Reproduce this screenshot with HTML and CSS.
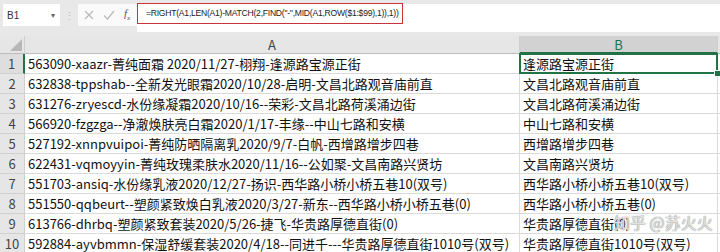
FILE: index.html
```html
<!DOCTYPE html>
<html lang="zh-CN">
<head>
    <meta charset="UTF-8">
    <title>Sheet1</title>
    <link rel="stylesheet" href="styles.css">
</head>
<body>
<div class="toolbar">
    <div class="namebox"><span>B1</span><span class="caret">&#9662;</span></div>
    <div class="grip">&#8942;</div>
    <div class="fnbtns">
        <svg width="10" height="10" viewBox="0 0 10 10"><path d="M1 1L9 9M9 1L1 9" stroke="#b9b9b9" stroke-width="1.2" fill="none"/></svg>
        <svg width="12" height="10" viewBox="0 0 12 10"><path d="M1 5.5L4.5 9L11 1" stroke="#b9b9b9" stroke-width="1.2" fill="none"/></svg>
        <span class="fx">f<sub>x</sub></span>
    </div>
    <div class="formula">
        <span class="formula-text">=RIGHT(A1,LEN(A1)-MATCH(2,FIND("-",MID(A1,ROW($1:$99),1)),1))</span>
        <div class="mark"></div>
    </div>
</div>

<div class="sheet">
    <div class="corner"><div class="tri"></div></div>
    <div class="colhead">A</div>
    <div class="colhead active">B</div>
    <div class="colhead"></div>

    <div class="rowhead active">1</div>
    <div class="cell">563090-xaazr-菁纯面霜 2020/11/27-栩翔-逢源路宝源正街</div>
    <div class="cell selected">逢源路宝源正街<i class="handle"></i></div>
    <div class="cell"></div>

    <div class="rowhead">2</div>
    <div class="cell">632838-tppshab--全新发光眼霜2020/10/28-启明-文昌北路观音庙前直</div>
    <div class="cell">文昌北路观音庙前直</div>
    <div class="cell"></div>

    <div class="rowhead">3</div>
    <div class="cell">631276-zryescd-水份缘凝霜2020/10/16--荣彩-文昌北路荷溪涌边街</div>
    <div class="cell">文昌北路荷溪涌边街</div>
    <div class="cell"></div>

    <div class="rowhead">4</div>
    <div class="cell">566920-fzgzga--净澈焕肤亮白霜2020/1/17-丰缘--中山七路和安横</div>
    <div class="cell">中山七路和安横</div>
    <div class="cell"></div>

    <div class="rowhead">5</div>
    <div class="cell">527192-xnnpvuipoi-菁纯防晒隔离乳2020/9/7-白帆-西增路增步四巷</div>
    <div class="cell">西增路增步四巷</div>
    <div class="cell"></div>

    <div class="rowhead">6</div>
    <div class="cell">622431-vqmoyyin-菁纯玫瑰柔肤水2020/11/16--公如聚-文昌南路兴贤坊</div>
    <div class="cell">文昌南路兴贤坊</div>
    <div class="cell"></div>

    <div class="rowhead">7</div>
    <div class="cell">551703-ansiq-水份缘乳液2020/12/27-扬识-西华路小桥小桥五巷10(双号)</div>
    <div class="cell">西华路小桥小桥五巷10(双号)</div>
    <div class="cell"></div>

    <div class="rowhead">8</div>
    <div class="cell">551550-qqbeurt--塑颜紧致焕白乳液2020/3/27-新东--西华路小桥小桥五巷(0)</div>
    <div class="cell">西华路小桥小桥五巷(0)</div>
    <div class="cell"></div>

    <div class="rowhead">9</div>
    <div class="cell">613766-dhrbq-塑颜紧致套装2020/5/26-捷飞-华贵路厚德直街(0)</div>
    <div class="cell">华贵路厚德直街(0)</div>
    <div class="cell"></div>

    <div class="rowhead">10</div>
    <div class="cell">592884-ayvbmmn-保湿舒缓套装2020/4/18--同进千---华贵路厚德直街1010号(双号)</div>
    <div class="cell">华贵路厚德直街1010号(双号)</div>
    <div class="cell"></div>
</div>

<div class="watermark">知乎 @苏火火</div>
</body>
</html>
```

FILE: styles.css
```css
body {
    margin: 0;
    width: 720px;
    height: 252px;
    overflow: hidden;
    background: #e8e8e8;
    font-family: "Noto Sans CJK SC", "Noto Sans", sans-serif;
    position: relative;
}
.toolbar {
    display: flex;
    align-items: flex-start;
    height: 32px;
    padding-top: 4px;
    padding-left: 3px;
    box-sizing: border-box;
    margin-bottom: 4px;
}
.namebox {
    width: 57px;
    height: 22px;
    background: #fff;
    display: flex;
    align-items: center;
    justify-content: space-between;
    padding: 0 5px 0 4px;
    box-sizing: border-box;
    font-family: "Liberation Sans", sans-serif;
    font-size: 10px;
    color: #333;
}
.caret {
    font-size: 8px;
    color: #666;
}
.grip {
    width: 18px;
    text-align: center;
    color: #b8b8b8;
    font-size: 11px;
    line-height: 22px;
}
.fnbtns {
    width: 59px;
    height: 22px;
    background: #fafafa;
    display: flex;
    align-items: center;
    gap: 9px;
    padding-left: 6px;
    box-sizing: border-box;
}
.fx {
    font-family: "Liberation Serif", serif;
    font-style: italic;
    font-size: 11px;
    color: #555;
}
.fx sub {
    font-size: 7px;
}
.formula {
    flex: 1;
    height: 28px;
    background: #fff;
    position: relative;
    padding-left: 9px;
    box-sizing: border-box;
    font-family: "Liberation Sans", sans-serif;
    font-size: 8.6px;
    letter-spacing: -0.25px;
    line-height: 18px;
    color: #222;
}
.mark {
    position: absolute;
    left: 0;
    top: -1px;
    width: 266px;
    height: 21px;
    border: 1.5px solid #c9343a;
    box-sizing: border-box;
}
.sheet {
    display: grid;
    grid-template-columns: 25px 495px 198px 1fr;
    grid-template-rows: 18px;
    grid-auto-rows: 20px;
    background: #fff;
    font-size: 13px;
    color: #111;
}
.corner {
    background: #e6e6e6;
    border-right: 1px solid #cfcfcf;
    border-bottom: 1px solid #bdbdbd;
    position: relative;
}
.tri {
    position: absolute;
    right: 2px;
    bottom: 2px;
    width: 0;
    height: 0;
    border-left: 12px solid transparent;
    border-bottom: 12px solid #b7b7b7;
}
.colhead {
    background: #e6e6e6;
    border-right: 1px solid #cfcfcf;
    border-bottom: 1px solid #bdbdbd;
    text-align: center;
    line-height: 17px;
    color: #444;
}
.colhead.active {
    background: #d2d2d2;
    color: #217346;
    border-bottom: 2px solid #217346;
}
.rowhead {
    background: #e6e6e6;
    border-right: 1px solid #cfcfcf;
    border-bottom: 1px solid #d0d0d0;
    text-align: center;
    line-height: 19px;
    color: #444;
}
.rowhead.active {
    background: #dedede;
    border-right: 2px solid #217346;
}
.cell {
    border-right: 1px solid #dadada;
    border-bottom: 1px solid #dadada;
    padding-left: 3px;
    line-height: 19px;
    white-space: nowrap;
    overflow: hidden;
}
.cell.selected {
    position: relative;
    overflow: visible;
}
.cell.selected::after {
    content: "";
    position: absolute;
    left: -1px;
    top: -1px;
    right: -1px;
    bottom: -1px;
    border: 2px solid #217346;
}
.handle {
    position: absolute;
    right: -4px;
    bottom: -4px;
    width: 5px;
    height: 5px;
    background: #217346;
    border: 1px solid #fff;
    z-index: 1;
}
.watermark {
    position: absolute;
    left: 614px;
    top: 211px;
    font-size: 16px;
    line-height: 22px;
    color: rgba(255, 255, 255, 0.75);
    text-shadow: 0 0 1px #888, 0 0 1px #888;
    white-space: nowrap;
}
```
